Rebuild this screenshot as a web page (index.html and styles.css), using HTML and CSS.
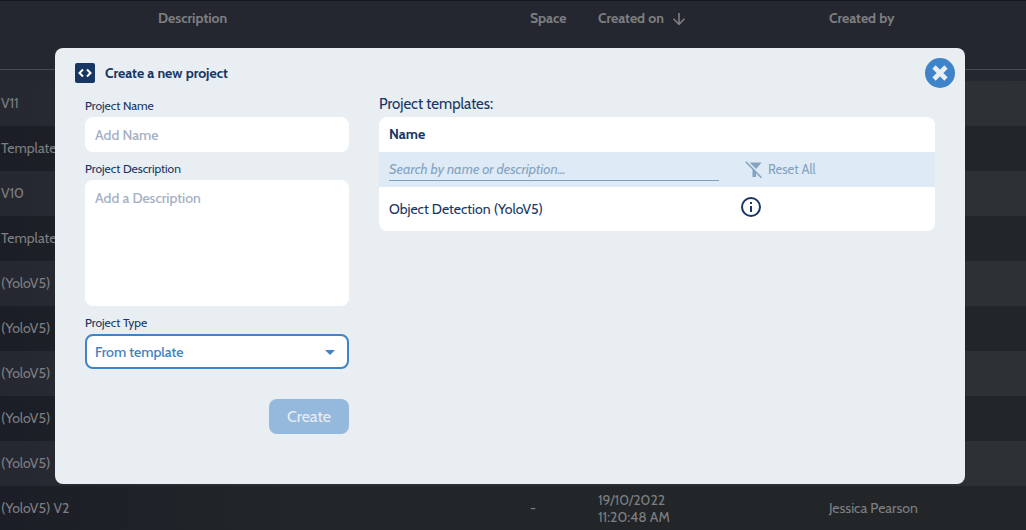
FILE: index.html
```html
<!DOCTYPE html>
<html lang="en">
<head>
<meta charset="utf-8">
<meta name="viewport" content="width=device-width, initial-scale=1">
<title>Create a new project</title>
<link rel="stylesheet" href="styles.css">
</head>
<body>
<main class="page">
  <table class="projects">
    <colgroup><col class="col-name"><col class="col-description"><col class="col-space"><col class="col-date"><col></colgroup>
    <thead>
      <tr>
        <th></th>
        <th>Description</th>
        <th>Space</th>
        <th><span class="sorted">Created on
          <svg width="14" height="14" viewBox="0 0 14 14" fill="none" stroke="currentColor" stroke-width="1.600"><path d="M7 1v11M1.500 6.800L7 12.300l5.500-5.500"/></svg></span></th>
        <th>Created by</th>
      </tr>
    </thead>
    <tbody>
      <tr class="spacer"><td colspan="5"></td></tr>
      <tr><td>V11</td><td></td><td></td><td></td><td></td></tr>
      <tr><td>Template</td><td></td><td></td><td></td><td></td></tr>
      <tr><td>V10</td><td></td><td></td><td></td><td></td></tr>
      <tr><td>Template</td><td></td><td></td><td></td><td></td></tr>
      <tr><td>(YoloV5)</td><td></td><td></td><td></td><td></td></tr>
      <tr><td>(YoloV5)</td><td></td><td></td><td></td><td></td></tr>
      <tr><td>(YoloV5)</td><td></td><td></td><td></td><td></td></tr>
      <tr><td>(YoloV5)</td><td></td><td></td><td></td><td></td></tr>
      <tr><td>(YoloV5)</td><td></td><td></td><td></td><td></td></tr>
      <tr><td>(YoloV5) V2</td><td></td><td>-</td><td>19/10/2022<br>11:20:48 AM</td><td>Jessica Pearson</td></tr>
    </tbody>
  </table>
</main>

<div class="overlay">
  <section class="dialog" role="dialog" aria-labelledby="dialog-title">
    <header class="dialog-header">
      <svg class="code-icon" width="20" height="20" viewBox="0 0 20 20"><rect width="20" height="20" rx="2" fill="#173664"/><path d="M8 6.500L4.500 10L8 13.500M12 6.500l3.500 3.500L12 13.500" fill="none" stroke="#fff" stroke-width="2"/></svg>
      <h1 class="dialog-title" id="dialog-title">Create a new project</h1>
      <button class="close" type="button" aria-label="Close">
        <svg width="30" height="30" viewBox="0 0 30 30"><circle cx="15" cy="15" r="15" fill="#3f83c8"/><path d="M9 9l12 12M21 9L9 21" stroke="#e8eef1" stroke-width="4.600"/></svg>
      </button>
    </header>
    <div class="dialog-body">
      <form class="form">
        <div class="field">
          <label for="name">Project Name</label>
          <input class="control" id="name" type="text" placeholder="Add Name">
        </div>
        <div class="field">
          <label for="description">Project Description</label>
          <textarea class="control control-area" id="description" placeholder="Add a Description"></textarea>
        </div>
        <div class="field">
          <label for="type">Project Type</label>
          <div class="select-wrap">
            <select class="control control-select" id="type"><option>From template</option></select>
            <svg class="caret" width="10" height="5" viewBox="0 0 10 5"><path d="M0 0h10L5 5z" fill="#3f83c8"/></svg>
          </div>
        </div>
        <button class="create" type="submit" disabled>Create</button>
      </form>
      <section class="templates">
        <h2 class="templates-title">Project templates:</h2>
        <table class="template-table">
          <colgroup><col><col class="col-action"></colgroup>
          <thead>
            <tr><th colspan="2">Name</th></tr>
            <tr class="filter">
              <td><input class="search" type="text" aria-label="Search templates" placeholder="Search by name or description..."></td>
              <td>
                <button class="reset" type="button">
                  <svg width="18" height="18" viewBox="0 0 18 18"><path d="M4.600 1.500H16.500L11.200 8.100zM7.500 7l3.500 4V16H7.500z" fill="currentColor"/><path d="M.8.800L16.500 16.700" stroke="currentColor" stroke-width="1.600"/></svg>
                  Reset All
                </button>
              </td>
            </tr>
          </thead>
          <tbody>
            <tr>
              <td>Object Detection (YoloV5)</td>
              <td>
                <button class="info" type="button" aria-label="Template details">
                  <svg width="20" height="20" viewBox="0 0 20 20"><circle cx="10" cy="10" r="9" fill="none" stroke="#173664" stroke-width="2"/><path d="M9 5h2v2H9zM9 9h2v6H9z" fill="#173664"/></svg>
                </button>
              </td>
            </tr>
          </tbody>
        </table>
      </section>
    </div>
  </section>
</div>
</body>
</html>
```
FILE: styles.css
```css
* {
  box-sizing: border-box;
}

body {
  margin: 0;
  height: 100vh;
  overflow: hidden;
  background: #181b27;
  color: #173664;
  font-family: Cabin, Lato, sans-serif;
  font-size: 14px;
  line-height: 17px;
}

input,
textarea,
select,
button {
  margin: 0;
  font: inherit;
  color: inherit;
}

button {
  padding: 0;
  border: 0;
  background: none;
}

svg {
  display: block;
}

/* Project list behind the dialog */

.projects {
  width: 100%;
  table-layout: fixed;
  border-collapse: separate;
  border-spacing: 0;
  border-top: 1px solid #141722;
  background: #242730;
  color: #7e7e80;
}

.col-name {
  width: 158px;
}

.col-description {
  width: 372px;
}

.col-space {
  width: 68px;
}

.col-date {
  width: 231px;
}

.projects th {
  height: 69px;
  padding: 9px 0 0;
  border-bottom: 1px solid #484b51;
  font-weight: 700;
  text-align: left;
  vertical-align: top;
}

.projects td {
  height: 45px;
  padding: 0;
}

.projects td:first-child {
  padding-left: 1px;
}

.projects .spacer td {
  height: 11px;
}

.projects tbody tr:nth-child(even) {
  background: linear-gradient(90deg, #252831, #2c3033 30%, #2d3134);
}

.projects tbody tr:nth-child(odd):not(.spacer) {
  background: linear-gradient(90deg, #1b1e26, #222629 30%, #222628);
}

.sorted {
  display: flex;
  align-items: center;
  gap: 8px;
}

/* Dialog */

.overlay {
  position: fixed;
  inset: 0;
  display: flex;
  padding: 48px 61px 46px 55px;
}

.dialog {
  flex: 1;
  padding: 10px 10px 20px 20px;
  border-radius: 8px;
  background: #e8eef1;
}

.dialog-header {
  display: flex;
  align-items: center;
  gap: 10px;
}

.dialog-title {
  flex: 1;
  margin: 0;
  font-size: 14px;
  font-weight: 700;
}

.dialog-body {
  display: flex;
  gap: 30px;
  padding: 7px 20px 0 10px;
}

.form {
  display: flex;
  flex: 0 0 264px;
  flex-direction: column;
  gap: 9px;
  padding-top: 3px;
}

.field {
  display: flex;
  flex-direction: column;
  gap: 3px;
  font-size: 12px;
  line-height: 16px;
}

.control {
  width: 100%;
  height: 35px;
  padding: 0 10px;
  border: 0;
  border-radius: 8px;
  background: #fff;
  font-size: 14px;
  font-weight: 500;
}

.control::placeholder {
  color: #a5b1c5;
  opacity: 1;
}

.control-area {
  display: block;
  height: 126px;
  padding: 10px;
  resize: none;
}

.select-wrap {
  position: relative;
}

.control-select {
  padding: 0 8px;
  border: 2px solid #3f83c8;
  appearance: none;
  color: #3f83c8;
}

.caret {
  position: absolute;
  top: 16px;
  right: 14px;
  pointer-events: none;
}

.create {
  align-self: flex-end;
  width: 80px;
  height: 35px;
  margin-top: 21px;
  border-radius: 8px;
  background: #95b8dd;
  color: #e8eef1;
  font-size: 16px;
}

/* Template picker */

.templates {
  flex: 1;
  min-width: 0;
}

.templates-title {
  margin: 0 0 4px;
  font-size: 15px;
  font-weight: 400;
  line-height: 18px;
}

.template-table {
  width: 100%;
  table-layout: fixed;
  border-collapse: separate;
  border-spacing: 0;
  overflow: hidden;
  border-radius: 8px;
  background: #fff;
}

.col-action {
  width: 194px;
}

.template-table th,
.template-table td {
  height: 35px;
  padding: 0 0 0 10px;
  font-weight: 700;
  text-align: left;
}

.template-table tbody td {
  height: 44px;
  font-weight: 400;
}

.template-table td + td {
  padding-left: 0;
}

.filter {
  background: #deeaf6;
}

.template-table .filter td:first-child {
  padding-right: 22px;
}

.search {
  display: block;
  width: 100%;
  height: 23px;
  padding: 0;
  border: 0;
  border-bottom: 1px solid #7ba2c0;
  background: none;
  font-style: italic;
  font-weight: 400;
}

.search::placeholder {
  color: #84a5c1;
  opacity: 1;
}

.reset {
  display: flex;
  align-items: center;
  gap: 5px;
  padding-left: 4px;
  color: #84a5c1;
  font-size: 13px;
  font-weight: 400;
}

.info {
  display: block;
  padding-bottom: 4px;
}
```
